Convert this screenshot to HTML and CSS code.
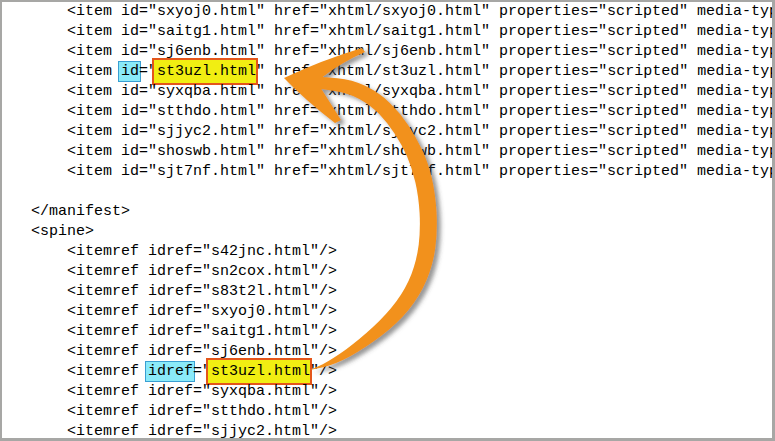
FILE: index.html
```html
<!DOCTYPE html>
<html lang="en">
<head>
    <meta charset="UTF-8">
    <title>content.opf - manifest and spine</title>
    <link rel="stylesheet" href="styles.css">
</head>
<body>
<div class="frame">
<pre class="code">    &lt;item id="sxyoj0.html" href="xhtml/sxyoj0.html" properties="scripted" media-type="application/xhtml+xml"/&gt;
    &lt;item id="saitg1.html" href="xhtml/saitg1.html" properties="scripted" media-type="application/xhtml+xml"/&gt;
    &lt;item id="sj6enb.html" href="xhtml/sj6enb.html" properties="scripted" media-type="application/xhtml+xml"/&gt;
    &lt;item <span class="hl-attr">id</span>="<span class="hl-val">st3uzl.html</span>" href="xhtml/st3uzl.html" properties="scripted" media-type="application/xhtml+xml"/&gt;
    &lt;item id="syxqba.html" href="xhtml/syxqba.html" properties="scripted" media-type="application/xhtml+xml"/&gt;
    &lt;item id="stthdo.html" href="xhtml/stthdo.html" properties="scripted" media-type="application/xhtml+xml"/&gt;
    &lt;item id="sjjyc2.html" href="xhtml/sjjyc2.html" properties="scripted" media-type="application/xhtml+xml"/&gt;
    &lt;item id="shoswb.html" href="xhtml/shoswb.html" properties="scripted" media-type="application/xhtml+xml"/&gt;
    &lt;item id="sjt7nf.html" href="xhtml/sjt7nf.html" properties="scripted" media-type="application/xhtml+xml"/&gt;

&lt;/manifest&gt;
&lt;spine&gt;
    &lt;itemref idref="s42jnc.html"/&gt;
    &lt;itemref idref="sn2cox.html"/&gt;
    &lt;itemref idref="s83t2l.html"/&gt;
    &lt;itemref idref="sxyoj0.html"/&gt;
    &lt;itemref idref="saitg1.html"/&gt;
    &lt;itemref idref="sj6enb.html"/&gt;
    &lt;itemref <span class="hl-attr">idref</span>="<span class="hl-val">st3uzl.html</span>"/&gt;
    &lt;itemref idref="syxqba.html"/&gt;
    &lt;itemref idref="stthdo.html"/&gt;
    &lt;itemref idref="sjjyc2.html"/&gt;
</pre>
</div>

<!-- arrow from the spine reference back up to the manifest item -->
<svg class="arrow" width="775" height="441" viewBox="0 0 775 441">
    <defs>
        <filter id="shadow" x="-20%" y="-20%" width="140%" height="140%">
            <feDropShadow dx="4" dy="3" stdDeviation="2.2" flood-color="#444" flood-opacity="0.55"/>
        </filter>
    </defs>
    <path fill="#f2911b" filter="url(#shadow)" d="M 284 78 Q 322 60 362 48 L 365 52 Q 342 62 322.6 77
        L 337.3 78.2 Q 352 79.3 365.7 86.1 Q 379.4 92.9 389.8 103 Q 400.2 113 408.1 125.1 Q 416 137.1 422.1 149.7
        Q 428.1 162.3 431.8 178.1 Q 435.4 193.8 436.5 212.1 Q 437.5 230.3 435.4 247.2 Q 433.2 264.1 426.6 280.1
        Q 419.9 296 408.5 310 Q 397 323.9 381 336 Q 365 348 350.7 355.9 Q 336.4 363.7 324.2 366.9 L 310 370
        L 322.8 364.2 Q 333.6 358.3 346.3 349.2 Q 359 340 373 327.1 Q 387 314.1 396.6 301.1 Q 406.1 288 411.5 274
        Q 416.8 259.9 418.7 244.8 Q 420.5 229.7 419.6 213 Q 418.6 196.2 415.3 182 Q 411.9 167.7 407 156.3
        Q 402 144.9 394.9 134 Q 387.8 123 379.2 114.1 Q 370.6 105.1 359.3 98.9 Q 348 92.7 334.7 90.9 L 321.4 89
        L 341 120 L 335 123 Q 305 100 284 78 Z"/>
</svg>
</body>
</html>
```

FILE: styles.css
```css
body {
    margin: 0;
    position: relative;
    background-color: #fff;
}
.frame {
    width: 775px;
    height: 441px;
    box-sizing: border-box;
    border-style: solid;
    border-color: #a7a7a5;
    border-width: 2px 3px 3px 2px;
    background-color: #fff;
    overflow: hidden;
}
.code {
    margin: 0;
    padding-left: 29px;
    font-family: "Liberation Mono", "Courier New", monospace;
    font-size: 15px;
    line-height: 20px;
    color: #000;
    white-space: pre;
}
.hl-attr {
    background-color: #8aeaf9;
    border: 1px solid #3a9fd2;
    padding: 1px 1px 1px 2px;
    margin: 0 -2px 0 -3px;
}
.hl-val {
    background-color: #f1ee12;
    border: 2px solid #e4561b;
    padding: 3px 0 3px 3px;
    margin: 0 -2px 0 -5px;
}
.arrow {
    position: absolute;
    top: 0;
    left: 0;
    pointer-events: none;
}
```
